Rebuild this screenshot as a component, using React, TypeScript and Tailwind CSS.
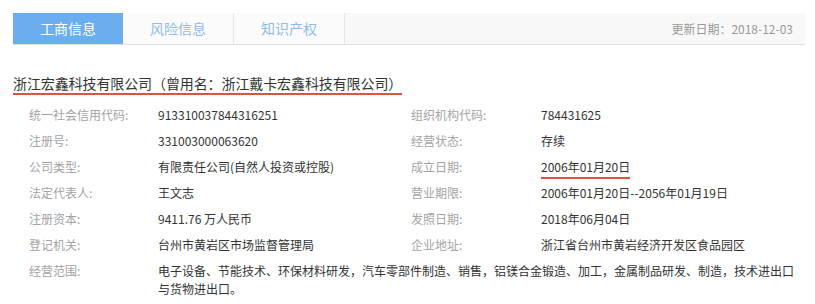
const FONT = { fontFamily: '"Noto Sans CJK SC", "Noto Sans", sans-serif' };

const rows: [string, React.ReactNode, string, React.ReactNode][] = [
  ['统一社会信用代码:', '913310037844316251', '组织机构代码:', '784431625'],
  ['注册号:', '331003000063620', '经营状态:', '存续'],
  [
    '公司类型:',
    '有限责任公司(自然人投资或控股)',
    '成立日期:',
    <span className="border-b-2 border-[#e4503f] pb-[2px]">2006年01月20日</span>,
  ],
  ['法定代表人:', '王文志', '营业期限:', '2006年01月20日--2056年01月19日'],
  ['注册资本:', '9411.76 万人民币', '发照日期:', '2018年06月04日'],
  ['登记机关:', '台州市黄岩区市场监督管理局', '企业地址:', '浙江省台州市黄岩经济开发区食品园区'],
];

const tabs = ['工商信息', '风险信息', '知识产权'];

export default function App() {
  return (
    <div className="w-[815px] h-[304px] bg-white overflow-hidden pt-[13px]" style={FONT}>
      <div className="ml-[13px] w-[792px] h-[32px] flex bg-[#f8f8f8] border-b border-[#e3e3e3]">
        {tabs.map((t, i) => (
          <div
            key={t}
            className={
              i === 0
                ? 'w-[110px] flex items-center justify-center text-[14px] text-white bg-[#6aaef0]'
                : 'w-[111px] flex items-center justify-center text-[14px] text-[#8fbbe6] bg-[#fbfbfb] border-r border-[#e6e6e6]'
            }
          >
            {t}
          </div>
        ))}
        <div className="flex-1 flex items-center justify-end pr-[12px] text-[12px] text-[#999]">
          更新日期：2018-12-03
        </div>
      </div>

      <div className="mt-[25px] ml-[13px]">
        <span className="inline-block text-[14px] leading-[20px] text-[#333] border-b-2 border-[#e4503f] tracking-[-0.1px]">
          浙江宏鑫科技有限公司（曾用名：浙江戴卡宏鑫科技有限公司）
        </span>
      </div>

      <div className="mt-[7px] pl-[29px] grid grid-cols-[129px_253px_130px_1fr] text-[12px] leading-[18px]">
        {rows.map(([l1, v1, l2, v2], i) => (
          <div key={i} className="contents">
            <div className="py-[4px] text-[#a3a3a3]">{l1}</div>
            <div className="py-[4px] text-[#333]">{v1}</div>
            <div className="py-[4px] text-[#a3a3a3]">{l2}</div>
            <div className="py-[4px] text-[#333] whitespace-nowrap">{v2}</div>
          </div>
        ))}
        <div className="py-[4px] text-[#a3a3a3]">经营范围:</div>
        <div className="col-span-3 py-[4px] text-[#333] w-[640px]">
          电子设备、节能技术、环保材料研发，汽车零部件制造、销售，铝镁合金锻造、加工，金属制品研发、制造，技术进出口与货物进出口。
        </div>
      </div>
    </div>
  );
}
